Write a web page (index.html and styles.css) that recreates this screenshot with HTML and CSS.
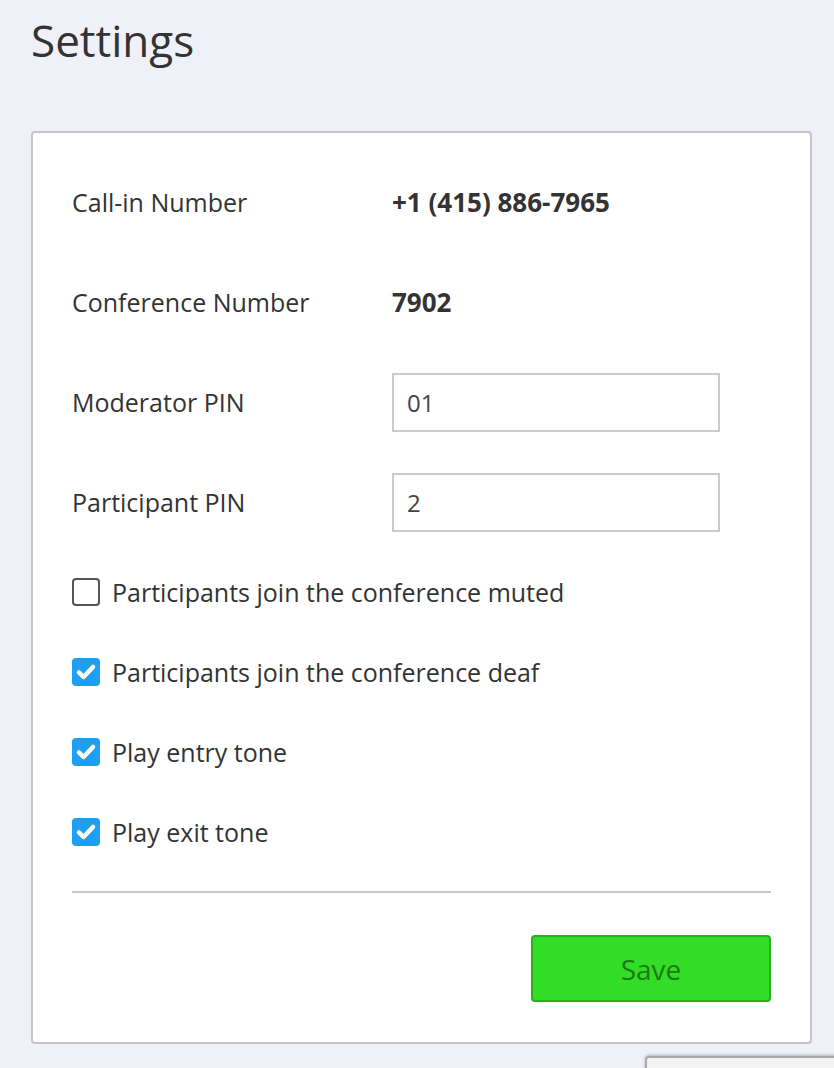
FILE: index.html
```html
<!DOCTYPE html>
<html>
<head>
<meta charset="utf-8">
<link rel="stylesheet" href="styles.css">
</head>
<body>
<div class="page">
  <h1 class="title">Settings</h1>
  <div class="card">
    <div class="row">
      <div class="label">Call-in Number</div>
      <div class="value">+1 (415) 886-7965</div>
    </div>
    <div class="row">
      <div class="label">Conference Number</div>
      <div class="value">7902</div>
    </div>
    <div class="row">
      <div class="label">Moderator PIN</div>
      <div class="input">01</div>
    </div>
    <div class="row">
      <div class="label">Participant PIN</div>
      <div class="input">2</div>
    </div>
    <div class="check-row">
      <span class="box"></span>
      <span class="check-label">Participants join the conference muted</span>
    </div>
    <div class="check-row">
      <span class="box checked"><svg viewBox="0 0 28 28" width="28" height="28"><path d="M7 14.5l4.5 4.5 9.5-10" fill="none" stroke="#fff" stroke-width="4.5" stroke-linecap="round" stroke-linejoin="round"/></svg></span>
      <span class="check-label">Participants join the conference deaf</span>
    </div>
    <div class="check-row">
      <span class="box checked"><svg viewBox="0 0 28 28" width="28" height="28"><path d="M7 14.5l4.5 4.5 9.5-10" fill="none" stroke="#fff" stroke-width="4.5" stroke-linecap="round" stroke-linejoin="round"/></svg></span>
      <span class="check-label">Play entry tone</span>
    </div>
    <div class="check-row">
      <span class="box checked"><svg viewBox="0 0 28 28" width="28" height="28"><path d="M7 14.5l4.5 4.5 9.5-10" fill="none" stroke="#fff" stroke-width="4.5" stroke-linecap="round" stroke-linejoin="round"/></svg></span>
      <span class="check-label">Play exit tone</span>
    </div>
    <div class="divider"></div>
    <div class="actions">
      <button class="save">Save</button>
    </div>
  </div>
  <div class="widget"></div>
</div>
</body>
</html>
```
FILE: styles.css
```css
html, body {
  margin: 0;
  padding: 0;
  background: #eff0f8;
}
body {
  font-family: "Open Sans", "Noto Sans", sans-serif;
  color: #333333;
  width: 834px;
  height: 1068px;
  overflow: hidden;
  position: relative;
}
.page {
  padding: 0 22px 0 31px;
}
.title {
  margin: 0;
  padding-top: 10px;
  height: 131px;
  box-sizing: border-box;
  font-size: 44px;
  font-weight: 400;
  line-height: 60px;
  color: #333;
}
.card {
  width: 781px;
  box-sizing: border-box;
  background: #fff;
  border: 2px solid #c4c4cc;
  border-radius: 4px;
  padding: 39px 39px 40px;
  display: flex;
  flex-direction: column;
  gap: 40px;
}
.row {
  display: flex;
  align-items: center;
  height: 60px;
}
.label {
  width: 320px;
  font-size: 25px;
}
.value {
  font-size: 26px;
  font-weight: 700;
}
.input {
  width: 328px;
  height: 59px;
  box-sizing: border-box;
  border: 2px solid #cccccc;
  padding-left: 13px;
  display: flex;
  align-items: center;
  font-size: 24px;
  color: #444;
}
.check-row {
  display: flex;
  align-items: center;
  height: 40px;
  gap: 12px;
}
.box {
  width: 28px;
  height: 28px;
  box-sizing: border-box;
  border: 2px solid #555;
  border-radius: 4px;
  background: #fff;
  display: flex;
}
.box.checked {
  border: none;
  background: #1e9ff2;
}
.check-label {
  font-size: 25px;
}
.divider {
  height: 2px;
  background: #c8c8cc;
  margin-top: -1px;
}
.actions {
  display: flex;
  justify-content: flex-end;
  margin-top: 2px;
}
.save {
  width: 240px;
  height: 67px;
  background: #33dc27;
  border: 2px solid #27b11c;
  border-radius: 4px;
  font-family: inherit;
  font-size: 28px;
  color: #1c7a14;
}
.widget {
  position: absolute;
  left: 645px;
  top: 1056px;
  width: 200px;
  height: 30px;
  background: #f3f3f3;
  border: 2px solid #a8a8a8;
  border-radius: 4px;
  box-shadow: 0 -1px 3px rgba(0,0,0,0.25);
}
```
